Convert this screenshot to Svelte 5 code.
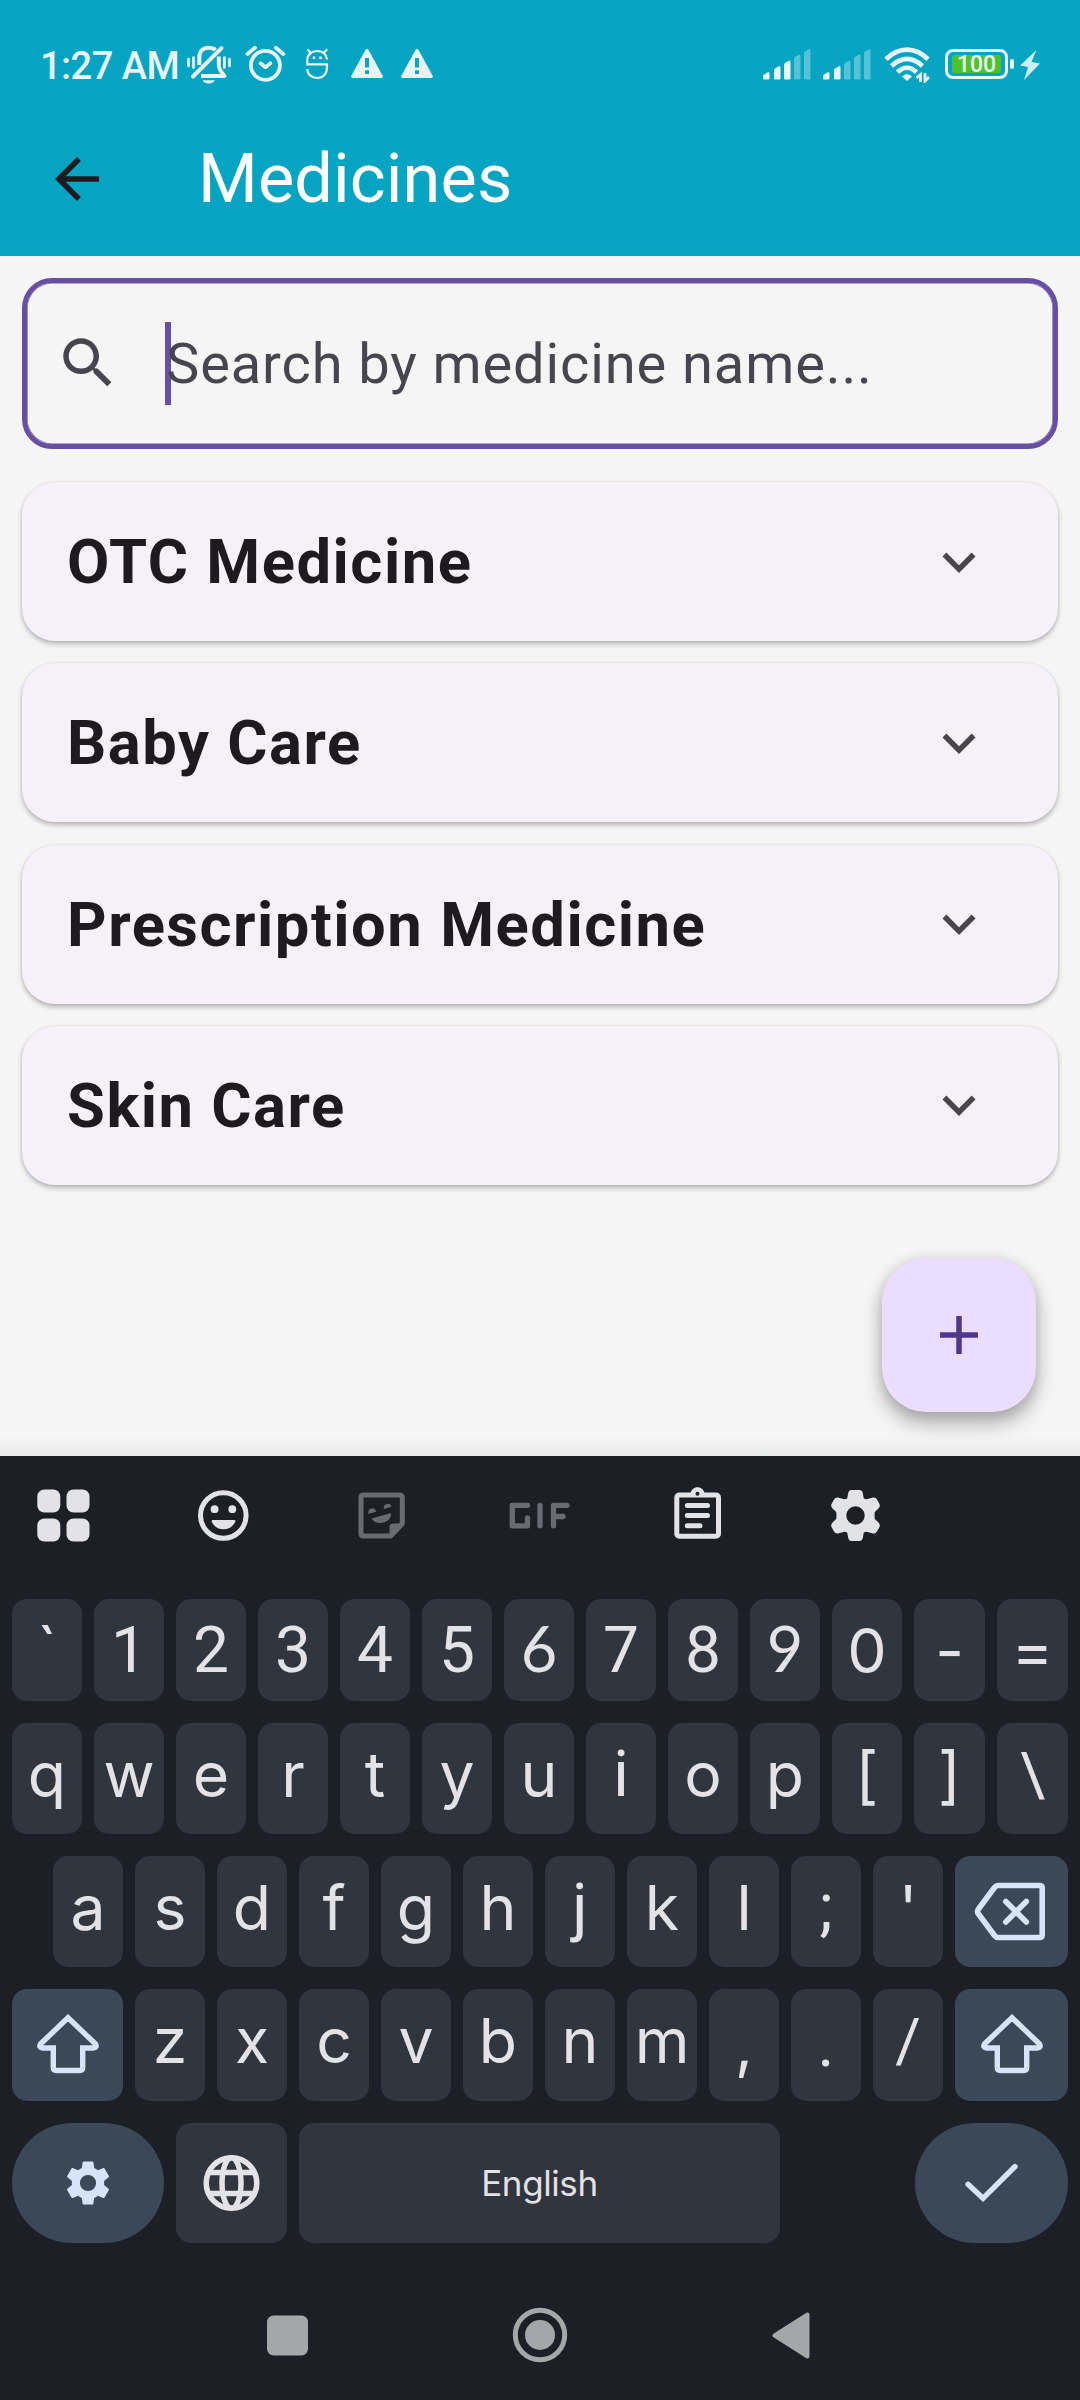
<script>
  const categories = ['OTC Medicine', 'Baby Care', 'Prescription Medicine', 'Skin Care'];
  const numberRow = [...'`1234567890-='];
  const topRow = [...'qwertyuiop[]\\'];
  const homeRow = [..."asdfghjkl;'"];
  const bottomRow = [...'zxcvbnm,./'];
  const signals = [3, 2];
  const bars = [
    { x: 0, top: 23 },
    { x: 11, top: 17 },
    { x: 21, top: 11.5 },
    { x: 31, top: 5.5 },
    { x: 41, top: 0 }
  ];
  // Glyph style per key: narrow round-dotted forms, open numerals, short slashes
  const glyphStyle = (c) => {
    if ('1234578ij;'.includes(c)) return 'narrow';
    if ('69'.includes(c)) return 'open';
    if (c === '.') return 'narrow low';
    if (c === ',') return 'low';
    if (c === '/' || c === '\\') return 'slash';
    return '';
  };
</script>

{#snippet key(label)}
  <div class="key"><span class={glyphStyle(label)}>{label}</span></div>
{/snippet}

{#snippet shift()}
  <svg width="64" height="62" viewBox="0 0 64 62" fill="none" stroke="#d7e3f8" stroke-width="5.400" stroke-linejoin="miter">
    <path d="M32 3.700 59.500 30Q61.500 33.700 57.500 34H46.700V53.500Q46.700 56.500 43.700 56.500H20.300Q17.300 56.500 17.300 53.500V34H6.500Q2.500 33.700 4.500 30Z" />
  </svg>
{/snippet}

<div class="screen">
  <header>
    <div class="status">
      <span class="time">1:27 AM</span>
      <svg class="bell" width="46" height="40" viewBox="186 45 46 40" fill="none" stroke="#e6f6f9" stroke-width="4">
        <path d="M188.500 59v7M193.500 57.500v10M224.400 57.500v10M229.500 59v7" stroke-width="2.700" stroke-linecap="round" />
        <path d="M199.300 65V57.500C199.300 51 203 47.800 208.700 47.800C211.700 47.800 214 48.500 215.500 50M218.800 56.500V65C219 70 221.500 72 224.500 76H201" stroke-linejoin="round" />
        <path d="M193 76.500 221.500 48.200" stroke-linecap="round" />
        <path d="M202.500 80.200H215C213.500 82.500 211.500 83.500 208.700 83.500S204 82.500 202.500 80.200Z" fill="#e6f6f9" stroke="none" />
      </svg>
      <svg class="alarm" width="41" height="38" viewBox="245 45 41 38" fill="none" stroke="#e6f6f9" stroke-linecap="round">
        <circle cx="265.400" cy="65.300" r="14.500" stroke-width="3.800" />
        <path d="M247.500 54 255 47.700M275.800 47.700 283.300 54" stroke-width="3.800" />
        <path d="M260.500 63.300 265.400 67.300 270.400 63.300" stroke-width="3.700" stroke-linejoin="round" />
      </svg>
      <svg class="bug" width="24" height="32" viewBox="305 48 24 32" fill="none" stroke="#e6f6f9" stroke-width="2.200">
        <path d="M327 59.500C326.500 54 322.500 51 317.200 51S307.300 54.500 307.300 60V64.300H327V67C327 74 323 78 317.200 78S307.300 74 307.300 69" />
        <path d="M308 50 311 53M326.500 50 323.500 53" stroke-linecap="round" />
        <path d="M314 56.500v2.500M320.500 56.500v2.500" stroke-width="2.500" />
      </svg>
      {#each [0, 1] as i (i)}
        <svg class="warn" width="32" height="29" viewBox="0 0 32 29">
          <path fill="#e6f6f9" fill-rule="evenodd" d="M16 0Q17 0 17.700 1.200L31.800 27Q32 29 30.500 29H1.500Q0 29 .2 27L14.300 1.200Q15 0 16 0ZM14 9V18.500H18V9ZM14 21.200V25H18V21.200Z" />
        </svg>
      {/each}
      <div class="spacer"></div>
      {#each signals as level}
        <svg class="signal" width="48" height="31" viewBox="0 0 48 31">
          {#each bars as b, i}
            <path fill="#e6f6f9" opacity={i < level ? 1 : 0.37} d="M{b.x} {b.top + 4}Q{b.x} {b.top + 3} {b.x + 1} {b.top + 2.500}L{b.x + 5.200} {b.top}Q{b.x + 6.500} {b.top} {b.x + 6.500} {b.top + 1.500}V29.500Q{b.x + 6.500} 30.500 {b.x + 5.500} 30.500H{b.x + 1}Q{b.x} 30.500 {b.x} 29.500Z" />
          {/each}
        </svg>
      {/each}
      <svg class="wifi" width="47" height="36" viewBox="884 47 47 36" fill="none" stroke="#e6f6f9" stroke-width="4.800">
        <path d="M886 59.300C899 46.500 915 46.500 928 59.300" />
        <path d="M891.500 66C901.500 56.500 912.500 56.500 922.500 66" />
        <path d="M897.500 72.300C903.500 66.300 910.500 66.300 916.500 72.300" />
        <path d="M902 76.500Q907 71.500 912 76.500L907 81Z" fill="#e6f6f9" stroke="none" />
        <path d="M920.500 82V74.500L916.500 78M925 73V81L929 77" stroke-width="2.800" />
      </svg>
      <div class="battery"><div class="charge">100</div></div>
      <div class="nub"></div>
      <svg class="bolt" width="20" height="30" viewBox="0 0 20 30"><path fill="#cdeef4" d="M16.500 0 11.500 12 20 13.500 4 30 8 17 0 15.500Z" /></svg>
    </div>
    <div class="appbar">
      <svg width="66" height="66" viewBox="0 0 24 24" fill="#1d1b20"><path d="M20 11H7.830l5.590-5.590L12 4l-8 8 8 8 1.410-1.410L7.830 13H20v-2z" /></svg>
      <h1>Medicines</h1>
    </div>
  </header>

  <main>
    <div class="search">
      <svg width="66" height="66" viewBox="0 0 24 24" fill="#49454f"><path d="M15.500 14h-.790l-.280-.270C15.410 12.590 16 11.110 16 9.500 16 5.910 13.090 3 9.500 3S3 5.910 3 9.500 5.910 16 9.500 16c1.610 0 3.090-.590 4.230-1.570l.270.280v.790l5 4.990L20.490 19l-4.990-5zm-6 0C7.010 14 5 11.990 5 9.500S7.010 5 9.500 5 14 7.010 14 9.500 11.990 14 9.500 14z" /></svg>
      <div class="field"><span class="caret"></span><span class="hint">Search by medicine name...</span></div>
    </div>
    {#each categories as name}
      <section class="card">
        <h2>{name}</h2>
        <svg width="66" height="66" viewBox="0 0 24 24" fill="#49454f"><path d="M16.590 8.590 12 13.170 7.410 8.590 6 10l6 6 6-6z" /></svg>
      </section>
    {/each}
    <div class="fab"><svg width="66" height="66" viewBox="0 0 24 24" fill="#4f378b"><path d="M18.900 13H13v5.900h-2V13H5.100v-2H11V5.100h2V11h5.900z" /></svg></div>
  </main>

  <div class="keyboard">
    <div class="tools">
      <svg width="54" height="54" viewBox="36 1488 54 54" fill="#e3e2e6">
        <rect x="37.300" y="1489.500" width="23" height="23" rx="7" /><rect x="66.500" y="1489.500" width="23" height="23" rx="7" />
        <rect x="37.300" y="1518.500" width="23" height="23" rx="7" /><rect x="66.500" y="1518.500" width="23" height="23" rx="7" />
      </svg>
      <svg width="54" height="54" viewBox="196 1488 54 54" fill="#e3e2e6">
        <circle cx="223.300" cy="1515.500" r="22.800" fill="none" stroke="#e3e2e6" stroke-width="5" />
        <circle cx="214.600" cy="1509.200" r="3.900" /><circle cx="232.300" cy="1509.200" r="3.900" />
        <path d="M213 1520H234Q236 1520 235.300 1521.800C233 1526.500 229 1529.300 223.500 1529.300S214 1526.500 211.700 1521.800Q211.200 1520 213 1520Z" />
      </svg>
      <svg width="54" height="54" viewBox="355 1488 54 54" fill="#686b72">
        <path d="M363.500 1495H399.500Q402.300 1495 402.300 1498V1523.500L390.500 1536H363.500Q361 1536 361 1533.500V1497.500Q361 1495 363.500 1495Z" fill="none" stroke="#686b72" stroke-width="5" />
        <path d="M389.500 1536V1527Q389.500 1523.500 393 1523.500H403.500V1526L392 1538Z" />
        <path d="M368.500 1513.700A4 4 0 1 1 376.200 1511.700ZM384 1509A4 4 0 1 1 391.600 1506.500ZM371.500 1518.500 390.500 1513.300C392 1514 390.500 1522 381.500 1523Q374.500 1523.500 371.500 1518.500Z" />
      </svg>
      <svg width="64" height="54" viewBox="507 1488 64 54" fill="none" stroke="#686b72" stroke-width="5.300" stroke-linecap="round" stroke-linejoin="round">
        <path d="M527.500 1505.300H512.300V1525.800H527.500V1518M540 1505.300V1525.800M567 1505.300H553.500V1525.800M553.500 1516.500H563" />
      </svg>
      <svg width="54" height="54" viewBox="671 1486 54 54" fill="none" stroke="#e3e2e6" stroke-width="5">
        <rect x="676.800" y="1495" width="41.700" height="41.300" rx="2.500" />
        <path d="M687.300 1505.500H707.500M687.300 1515.500H707.500M687.300 1525.700H700" stroke-linecap="round" />
        <path d="M690.500 1494C691 1485 704 1485 704.500 1494Z" fill="#e3e2e6" stroke="none" /><circle cx="697.500" cy="1493.800" r="2" fill="#1c1f26" stroke="none" />
      </svg>
      <svg width="54" height="54" viewBox="828 1488 54 54">
        <path fill="#e3e2e6" fill-rule="evenodd" d="M851.500 1490H859.500Q862 1490 862.800 1493L863.800 1498.500Q866.500 1499.700 868.500 1498.700L873 1497.500Q875.500 1497 877 1499.500L879.500 1504Q880.500 1506.500 878.500 1508.500L874.800 1512Q874.300 1515.500 874.800 1519L878.500 1522.500Q880.500 1524.500 879.500 1527L877 1531.500Q875.500 1534 873 1533.500L868.500 1532.300Q866.500 1531.300 863.800 1532.500L862.800 1538Q862 1541 859.500 1541H851.500Q849 1541 848.200 1538L847.200 1532.500Q844.500 1531.300 842.500 1532.300L838 1533.500Q835.500 1534 834 1531.500L831.500 1527Q830.500 1524.500 832.500 1522.500L836.200 1519Q836.700 1515.500 836.200 1512L832.500 1508.500Q830.500 1506.500 831.500 1504L834 1499.500Q835.500 1497 838 1497.500L842.500 1498.700Q844.500 1499.700 847.200 1498.500L848.200 1493Q849 1490 851.500 1490ZM855.500 1506.300A9.200 9.200 0 1 0 855.500 1524.700A9.200 9.200 0 1 0 855.500 1506.300Z" />
      </svg>
    </div>

    <div class="row numbers">{#each numberRow as c}{@render key(c)}{/each}</div>
    <div class="row letters">{#each topRow as c}{@render key(c)}{/each}</div>
    <div class="row home">
      {#each homeRow as c}{@render key(c)}{/each}
      <div class="key action">
        <svg width="72" height="60" viewBox="974 1881 72 60" fill="none" stroke="#d7e3f8" stroke-width="5.600" stroke-linejoin="round" stroke-linecap="round">
          <path d="M998 1884.500H1039.500Q1042.200 1884.500 1042.200 1887V1934Q1042.200 1936.500 1039.500 1936.500H998Q996 1936.500 994.500 1934.500L978.500 1913Q976.500 1910.500 978.500 1908L994.500 1886.500Q996 1884.500 998 1884.500ZM1005.800 1900.500 1026.300 1921M1026.300 1900.500 1005.800 1921" />
        </svg>
      </div>
    </div>
    <div class="row bottom">
      <div class="key action">{@render shift()}</div>
      {#each bottomRow as c}{@render key(c)}{/each}
      <div class="key action">{@render shift()}</div>
    </div>
    <div class="row space">
      <div class="key action pill">
        <svg width="54" height="54" viewBox="0 0 24 24" fill="#d7e3f8"><path d="M19.140 12.940c.040-.300.060-.610.060-.940 0-.320-.020-.640-.070-.940l2.030-1.580c.180-.140.230-.410.120-.610l-1.920-3.320c-.120-.220-.370-.290-.590-.220l-2.390.960c-.500-.380-1.030-.700-1.620-.940l-.360-2.540c-.040-.240-.240-.410-.480-.410h-3.840c-.240 0-.430.170-.470.410l-.360 2.540c-.590.240-1.130.570-1.620.940l-2.390-.960c-.220-.080-.470 0-.590.220L2.740 8.870c-.120.210-.080.470.120.610l2.030 1.580c-.050.300-.090.630-.090.940s.020.640.070.940l-2.030 1.580c-.180.140-.230.410-.120.610l1.920 3.320c.120.220.370.290.590.220l2.390-.960c.500.380 1.030.700 1.620.940l.360 2.540c.050.240.240.410.480.410h3.840c.240 0 .440-.170.470-.410l.360-2.540c.590-.240 1.130-.560 1.620-.940l2.390.960c.220.080.470 0 .590-.220l1.920-3.320c.120-.220.070-.470-.120-.610l-2.010-1.580zM12 15.600A3.600 3.600 0 1 1 12 8.400a3.600 3.600 0 0 1 0 7.200z" /></svg>
      </div>
      <div class="key globe">
        <svg width="58" height="58" viewBox="-28.500 -29 58 58" fill="none" stroke="#e3e2e6" stroke-width="5.500"><circle r="25.300" /><ellipse rx="9.500" ry="25.300" /><path d="M-24-10.500H24M-24 10.500H24" /></svg>
      </div>
      <div class="key spacebar">English</div>
      <div class="key action pill enter">
        <svg width="56" height="42" viewBox="0 0 56 42" fill="none" stroke="#d7e3f8" stroke-width="5.300" stroke-linecap="round"><path d="M4 22.300 19 36.300 51 4.500" /></svg>
      </div>
    </div>

    <nav>
      <svg width="41" height="41" viewBox="0 0 41 41"><rect width="41" height="40" y=".5" rx="6.500" fill="#a5a6a8" /></svg>
      <svg width="56" height="56" viewBox="-28 -28 56 56"><circle r="24.700" fill="none" stroke="#a5a6a8" stroke-width="5" /><circle r="15" fill="#a5a6a8" /></svg>
      <svg width="38" height="47" viewBox="0 0 38 47"><path d="M35.500 2.500V44.500L2.500 23.500Z" fill="#a5a6a8" stroke="#a5a6a8" stroke-width="4" stroke-linejoin="round" /></svg>
    </nav>
  </div>
</div>

<style>
  :global(body) { margin: 0; }
  .screen { width: 1080px; height: 2400px; display: flex; flex-direction: column; overflow: hidden; background: #f5f5f5; font-family: Roboto, sans-serif; }
  svg { display: block; flex: none; }
  header { height: 256px; background: #04a4c2; flex: none; }
  .status { height: 130px; display: flex; align-items: flex-start; box-sizing: border-box; padding: 45px 40px 0; }
  .time { width: 139px; margin: -1px 7px 0 0; font-size: 38px; line-height: 44px; font-weight: 500; letter-spacing: -0.500px; color: #e6f6f9; white-space: nowrap; flex: none; }
  .alarm { margin-left: 13px; }
  .bug { margin: 3px 0 0 19px; }
  .warn { margin: 4px 0 0 22px; }
  .warn + .warn { margin-left: 18px; }
  .spacer { flex: 1; }
  .signal { margin: 4px 12px 0 0; }
  .wifi { margin: 2px 0 0 1px; }
  .battery { box-sizing: border-box; width: 63px; height: 30px; margin: 4px 0 0 14px; padding: 3px 4px; border: 3px solid #e6f6f9; border-radius: 8px; flex: none; }
  .charge { height: 18px; background: #4fc22b; border-radius: 3px; color: #e6f6f9; font-size: 23px; line-height: 20px; font-weight: 500; text-align: center; }
  .nub { width: 4px; height: 10px; margin: 14px 6px 0 2px; border-radius: 2px; background: #e6f6f9; flex: none; }
  .bolt { margin-top: 5px; }
  .appbar { display: flex; align-items: center; height: 98px; padding-left: 44px; }
  h1 { margin: 0 0 0 88px; font-size: 68.500px; font-weight: 400; line-height: 80px; letter-spacing: 0.100px; color: #fff; }
  main { position: relative; height: 1200px; box-sizing: border-box; padding: 22px; flex: none; background: linear-gradient(#f5f5f5 1180px, #e9eaea); }
  .search { box-sizing: border-box; height: 171px; border: 5px solid #6750a4; box-shadow: inset 0 0 0 0.600px #6750a4; border-radius: 30px; display: flex; align-items: center; padding-left: 28px; margin-bottom: 33px; }
  .search svg { margin-top: -1px; }
  .field { display: flex; align-items: center; margin-left: 44px; }
  .caret { width: 5.500px; height: 83px; background: #6750a4; margin-right: -5.500px; }
  .hint { font-size: 56px; line-height: 83px; letter-spacing: 0.900px; color: #49454f; white-space: nowrap; padding-top: 2px; margin-left: 1px; }
  .card { box-sizing: border-box; height: 159px; margin-bottom: 22.330px; padding: 0 66px 0 45px; border-radius: 33px; background: #f6f1f9; display: flex; align-items: center; justify-content: space-between; box-shadow: 0 3px 5px rgba(0, 0, 0, 0.25), 0 0 3px rgba(0, 0, 0, 0.08); }
  h2 { margin: 0; padding-top: 1px; font-size: 61.500px; line-height: 80px; font-weight: 700; letter-spacing: 1.520px; color: #1d1b20; white-space: nowrap; }
  .fab { position: absolute; right: 44px; bottom: 44px; width: 154px; height: 154px; border-radius: 44px; background: #eaddff; display: flex; align-items: center; justify-content: center; box-shadow: 0 11px 19px rgba(0, 0, 0, 0.3), 0 1px 14px rgba(0, 0, 0, 0.1); }
  .keyboard { height: 944px; flex: none; background: #1c1f26; display: flex; flex-direction: column; box-sizing: border-box; padding: 0 12px; }
  .tools { height: 143px; flex: none; box-sizing: border-box; padding: 32px 0 0 24px; display: flex; align-items: flex-start; }
  .tools svg + svg { margin-left: 106px; }
  .tools svg:nth-child(3) { margin-left: 105px; }
  .tools svg:nth-child(4) { margin-left: 98px; }
  .tools svg:nth-child(5) { margin: -2px 0 0 100px; }
  .tools svg:nth-child(6) { margin-left: 103px; }
  .row { display: grid; gap: 12px; flex: none; }
  .numbers, .letters { grid-template-columns: repeat(11, 70px) 71px 71px; }
  .numbers { height: 102px; margin-bottom: 22px; }
  .letters { height: 111px; margin-bottom: 22px; }
  .home { height: 111px; margin-bottom: 22px; padding-left: 41px; grid-template-columns: repeat(11, 70px) 113px; }
  .bottom { height: 112px; margin-bottom: 22px; grid-template-columns: 111px repeat(10, 70px) 113px; }
  .space { height: 120px; grid-template-columns: 152px 111px 481px 153px; }
  .key { border-radius: 15px; background: #31353d; color: #e3e2e6; text-align: center; font: 400 62.500px/102px Inter, sans-serif; overflow: hidden; }
  .key span { display: block; }
  .key .narrow { font: 400 64px/104px Roboto, sans-serif; }
  .key .open { font: 400 63px/98px Lato, sans-serif; }
  .key .slash { font: 400 62px/104px Roboto, sans-serif; }
  .key .low { transform: translateY(4px); }
  .action, .globe, .spacebar { display: flex; align-items: center; justify-content: center; }
  .action { background: #3b4858; }
  .home .action svg { margin-left: -3px; }
  .pill { border-radius: 60px; }
  .enter { margin-left: 123px; width: 153px; }
  .spacebar { font-size: 35px; letter-spacing: -0.400px; }
  nav { display: flex; align-items: center; flex: 1; padding: 27px 0 0 255px; }
  nav svg:nth-child(2) { margin-left: 204px; }
  nav svg:nth-child(3) { margin-left: 204px; }
</style>
